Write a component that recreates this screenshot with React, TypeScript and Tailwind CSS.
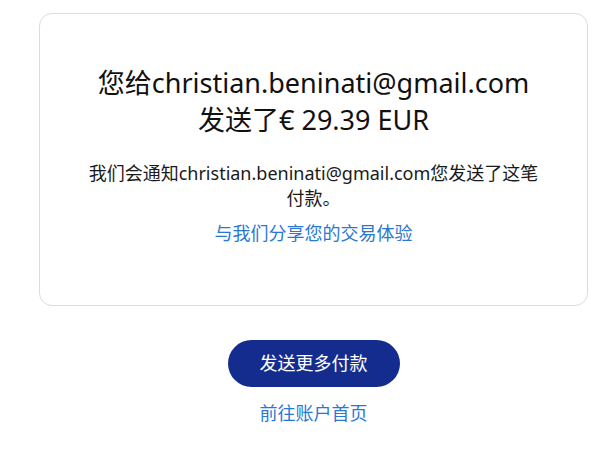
const FONT = "font-['Noto_Sans','Noto_Sans_CJK_SC',sans-serif]";

export default function App() {
  return (
    <div className={`min-h-screen bg-white pl-[39px] pr-[19px] pt-[13px] text-[#1a1a1a] ${FONT}`}>
      <div className="flex h-[293px] flex-col items-center rounded-[13px] border border-[#dcdcdc] px-10 pt-[50px] text-center">
        <h1 className="text-[27px] leading-[37px] text-[#111]">
          您给christian.beninati@gmail.com
          <br />
          发送了€ 29.39 EUR
        </h1>
        <p className="mt-[23px] max-w-[450px] text-[18px] leading-[25px] text-[#1a1a1a]">
          我们会通知christian.beninati@gmail.com您发送了这笔付款。
        </p>
        <a className="mt-[10px] text-[18px] leading-[25px] text-[#2a78d1]">与我们分享您的交易体验</a>
      </div>

      <div className="mt-[34px] flex flex-col items-center">
        <button className="h-[47px] w-[172px] rounded-full bg-[#142c8e] text-[18px] text-white">
          发送更多付款
        </button>
        <a className="mt-[15px] text-[18px] leading-[22px] text-[#2a78d1]">前往账户首页</a>
      </div>
    </div>
  );
}
